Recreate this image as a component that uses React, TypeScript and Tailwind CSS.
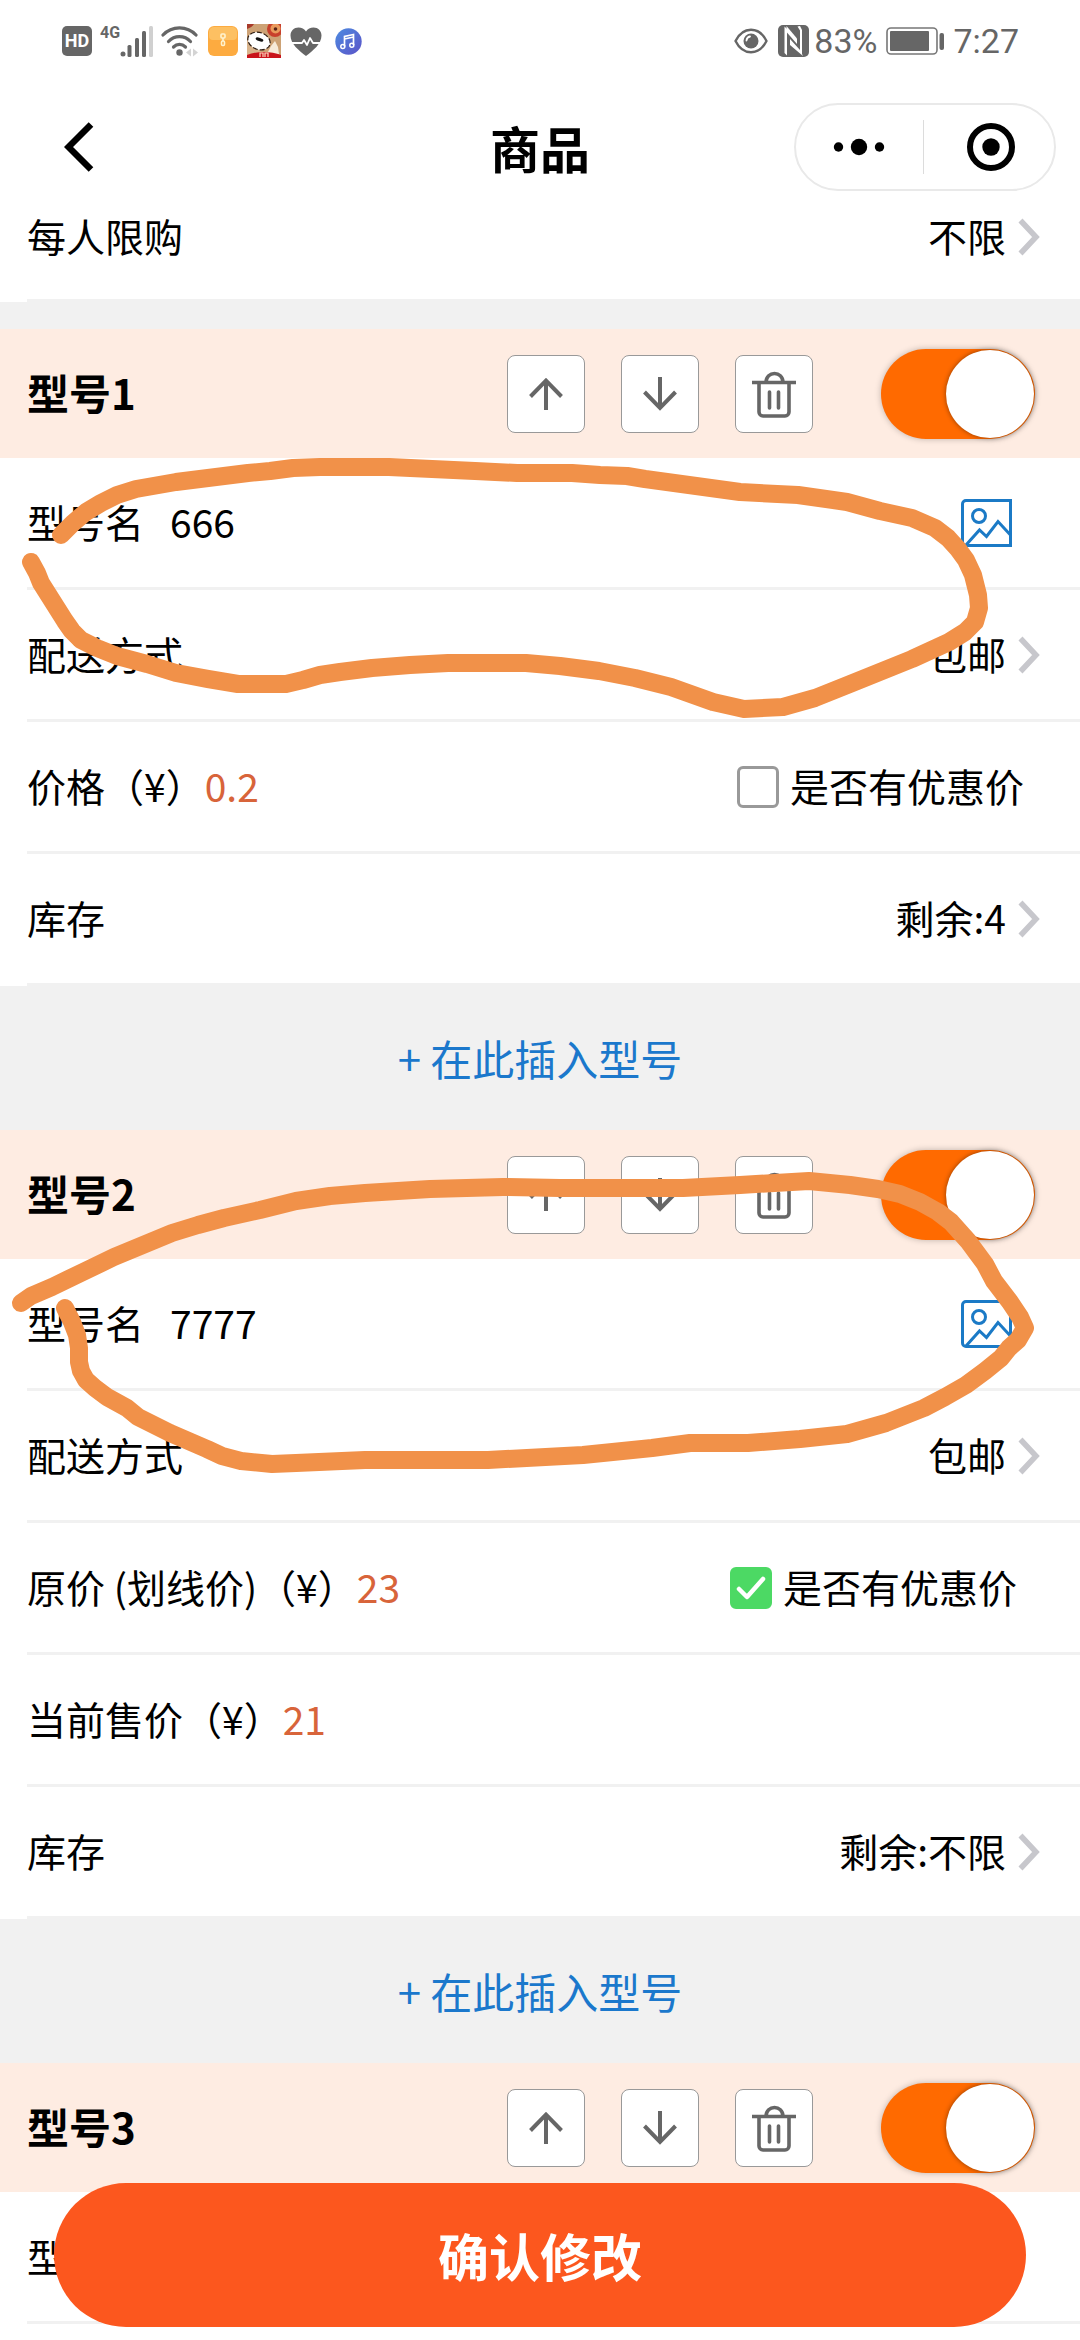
import type { ReactNode } from "react";
import clsx from "clsx";

type Model = {
  id: number;
  name: string;
  shipping?: string;
  prices?: { label: string; value: string }[];
  discount?: boolean;
  stock?: string;
};

const MODELS: Model[] = [
  {
    id: 1,
    name: "666",
    shipping: "包邮",
    prices: [{ label: "价格（¥）", value: "0.2" }],
    discount: false,
    stock: "剩余:4",
  },
  {
    id: 2,
    name: "7777",
    shipping: "包邮",
    prices: [
      { label: "原价 (划线价)（¥）", value: "23" },
      { label: "当前售价（¥）", value: "21" },
    ],
    discount: true,
    stock: "剩余:不限",
  },
  { id: 3, name: "" },
];

/* ---------- status bar ---------- */

function SignalIcon() {
  return (
    <svg width="34" height="32" viewBox="0 0 34 32" fill="#666">
      <circle cx="3" cy="29" r="2.5" />
      <rect x="7.5" y="20" width="4" height="12" rx="1.5" />
      <rect x="15" y="13" width="4" height="19" rx="1.5" />
      <rect x="22" y="6" width="4" height="26" rx="1.5" />
      <rect x="29" y="1" width="4" height="31" rx="1.5" fill="#d0d0d0" />
    </svg>
  );
}

function WifiIcon() {
  return (
    <svg width="38" height="32" viewBox="0 0 38 32" fill="none" stroke="#666" strokeWidth="3.2" strokeLinecap="round">
      <path d="M2 10C11 0.5 26 0.5 35 10" />
      <path d="M7.5 16.5C13.5 10 23.5 10 29.5 16.5" />
      <path d="M12.5 22C16 18.5 21 18.5 24.5 22" />
      <circle cx="18.5" cy="27.5" r="3.2" fill="#666" stroke="none" />
      <path d="M30 23.5v8l-5-4zM32 23.5v8l5-4z" fill="#d4d4d4" stroke="none" />
    </svg>
  );
}

function ArchiveAppIcon() {
  return (
    <svg width="30" height="30" viewBox="0 0 30 30">
      <rect width="30" height="30" rx="6" fill="#fdab40" />
      <path d="M1 6a5 5 0 0 1 5-5h18a5 5 0 0 1 5 5v4a4 4 0 0 1-4 4H5a4 4 0 0 1-4-4z" fill="#fdc062" />
      <g fill="none" stroke="#fff3cf" strokeWidth="1.6">
        <rect x="13" y="8" width="4" height="4" rx="1" />
        <path d="M15 12v3" />
        <rect x="13.5" y="15" width="3" height="4.5" rx="1.2" />
      </g>
    </svg>
  );
}

function MallAppIcon() {
  return (
    <svg width="34" height="34" viewBox="0 0 34 34">
      <rect width="34" height="34" fill="#cda275" />
      <path d="M0 13c8 2 14 12 15 21H0z" fill="#d9b48c" />
      <path d="M0 0h7c-1 2-4 4-7 5z" fill="#a83a2a" />
      <circle cx="28" cy="5" r="8" fill="#c8402c" />
      <circle cx="28.5" cy="4.5" r="5" fill="#e99a5c" />
      <circle cx="28.5" cy="5" r="1.8" fill="#5a2416" />
      <path d="M24 22l4-5 3 6 1 7H20z" fill="#f6ead9" />
      <ellipse
        cx="12"
        cy="17"
        rx="11.5"
        ry="8.5"
        transform="rotate(20 12 17)"
        fill="#fff"
        stroke="#2a1a10"
        strokeWidth="1.2"
        strokeDasharray="5 2"
      />
      <ellipse cx="12.5" cy="15.5" rx="4" ry="1.7" transform="rotate(18 12.5 15.5)" fill="#111" />
      <path d="M0 31c10-4 24-4 34 0v3H0z" fill="#c9141b" />
      <path d="M13 33v-4h3v4M18 33v-4h3v4" fill="none" stroke="#ffd9c0" strokeWidth="1.2" />
    </svg>
  );
}

function HealthIcon() {
  return (
    <svg width="32" height="29" viewBox="0 0 32 29">
      <path
        d="M16 29C9 23.5 0.5 17 0.5 8.5 0.5 4 4 0.5 8.5 0.5 11.5 0.5 14.5 2 16 4.5 17.5 2 20.5 0.5 23.5 0.5 28 0.5 31.5 4 31.5 8.5 31.5 17 23 23.5 16 29z"
        fill="#666"
      />
      <path d="M2 16h10l2-3 3 5 3-7 3 5h8" fill="none" stroke="#fff" strokeWidth="1.8" strokeLinejoin="round" />
    </svg>
  );
}

function MusicIcon() {
  return (
    <svg width="27" height="27" viewBox="0 0 27 27">
      <defs>
        <linearGradient id="music" x1="0" y1="0" x2="1" y2="1">
          <stop offset="0" stopColor="#4d8be0" />
          <stop offset="1" stopColor="#5b53c8" />
        </linearGradient>
      </defs>
      <circle cx="13.5" cy="13.5" r="13.2" fill="url(#music)" />
      <path d="M9.500 18.500V8.500l9-2v10.500M9.500 11l9-2" fill="none" stroke="#fff" strokeWidth="1.7" />
      <circle cx="7.8" cy="18.5" r="2" fill="none" stroke="#fff" strokeWidth="1.5" />
      <circle cx="16.8" cy="17.3" r="2" fill="none" stroke="#fff" strokeWidth="1.5" />
    </svg>
  );
}

function EyeIcon() {
  return (
    <svg width="34" height="26" viewBox="0 0 34 26">
      <path
        d="M1.500 13C9-2 25-2 32.500 13 25 28 9 28 1.500 13z"
        fill="none"
        stroke="#666"
        strokeWidth="2.4"
        strokeLinejoin="round"
      />
      <circle cx="17" cy="13" r="7.5" fill="#666" />
      <path d="M12.500 12.500a4.500 4.500 0 0 1 3.500-4" fill="none" stroke="#fff" strokeWidth="1.8" strokeLinecap="round" />
    </svg>
  );
}

function NfcIcon() {
  return (
    <svg width="31" height="32" viewBox="0 0 31 32">
      <rect width="31" height="32" rx="5" fill="#666" />
      <path d="M6.500 1.500L9 4v26.500L6.500 28z" fill="#fff" />
      <path d="M8.500 1L19 13.500V19L8.500 7z" fill="#fff" />
      <path d="M19.500 1.500l2.500 4V25l-10-11v6l13 11-1-2V5l-2-4z" fill="#fff" />
    </svg>
  );
}

function BatteryIcon() {
  return (
    <svg width="58" height="28" viewBox="0 0 58 28">
      <rect x="1" y="1" width="50" height="26" rx="4" fill="none" stroke="#777" strokeWidth="1.6" />
      <rect x="4" y="4" width="39" height="20" rx="1" fill="#666" />
      <rect x="53.5" y="6" width="4.5" height="17" rx="2" fill="#666" />
    </svg>
  );
}

function StatusBar() {
  return (
    <div className="flex h-[82px] items-center justify-between pr-[61px] pl-[62px] font-[Roboto,sans-serif] text-[#666]">
      <div className="flex items-center">
        <span className="flex size-[30px] items-center justify-center rounded-[5px] bg-[#666] text-[18px] leading-none font-bold text-white">
          HD
        </span>
        <span className="ml-2 flex h-8 items-start">
          <span className="text-[16px] leading-4 font-bold">4G</span>
          <SignalIcon />
        </span>
        <span className="ml-[7px] flex items-center gap-[9px]">
          <WifiIcon />
          <ArchiveAppIcon />
          <MallAppIcon />
          <HealthIcon />
          <span className="pl-1">
            <MusicIcon />
          </span>
        </span>
      </div>
      <div className="flex items-center text-[34px] leading-10">
        <EyeIcon />
        <span className="ml-[10px]">
          <NfcIcon />
        </span>
        <span className="ml-[5px]">83%</span>
        <span className="mx-[9px]">
          <BatteryIcon />
        </span>
        <span>7:27</span>
      </div>
    </div>
  );
}

function NavBar() {
  return (
    <header className="grid h-[130px] grid-cols-[1fr_auto_1fr] items-center px-6">
      <button type="button" aria-label="返回" className="justify-self-start pl-10">
        <svg width="30" height="50" viewBox="0 0 30 50" fill="none" stroke="#000" strokeWidth="6.5">
          <path d="M27 2.500L4.500 25 27 47.500" />
        </svg>
      </button>
      <h1 className="text-[50px] leading-[60px] font-bold">商品</h1>
      <div className="flex h-[88px] w-[262px] items-center justify-self-end rounded-full border-2 border-[#e9e9e9] bg-white">
        <button type="button" aria-label="更多" className="flex flex-1 justify-center">
          <svg width="52" height="18" viewBox="0 0 52 18">
            <circle cx="5.5" cy="9" r="4.7" />
            <circle cx="26" cy="9" r="8.2" />
            <circle cx="46.5" cy="9" r="4.7" />
          </svg>
        </button>
        <span className="h-[54px] w-px bg-[#dcdcdc]" />
        <button type="button" aria-label="关闭" className="flex flex-1 justify-center pl-1">
          <svg width="50" height="50" viewBox="0 0 50 50">
            <circle cx="25" cy="25" r="21" fill="none" stroke="#000" strokeWidth="6" />
            <circle cx="25" cy="25" r="8.7" />
          </svg>
        </button>
      </div>
    </header>
  );
}

/* ---------- form rows ---------- */

function Chevron() {
  return (
    <svg width="22" height="38" viewBox="0 0 22 38" fill="none" stroke="#c7c7cc" strokeWidth="5.5" className="shrink-0">
      <path d="M2.500 2.500L18 19 2.500 35.500" />
    </svg>
  );
}

function Row({ children, scrolled }: { children: ReactNode; scrolled?: boolean }) {
  return (
    <div className="bg-white pl-[27px]">
      <div
        className={clsx(
          "flex justify-between border-b-[3px] border-[#f1f1f1]",
          scrolled ? "h-[90px] items-start pt-[3px]" : "h-[132px] items-center",
        )}
      >
        {children}
      </div>
    </div>
  );
}

function LinkRow({ label, value, scrolled }: { label: string; value: string; scrolled?: boolean }) {
  return (
    <Row scrolled={scrolled}>
      <span className="pb-[3px]">{label}</span>
      <button type="button" className="flex items-center gap-3 pr-10">
        <span className="pb-[3px]">{value}</span>
        <Chevron />
      </button>
    </Row>
  );
}

function ToolButton({ label, children }: { label: string; children: ReactNode }) {
  return (
    <button
      type="button"
      aria-label={label}
      className="flex size-[78px] items-center justify-center rounded-lg border border-[#999] bg-white"
    >
      <svg width="46" height="48" viewBox="0 0 46 48" fill="none" stroke="#666" strokeWidth="4">
        {children}
      </svg>
    </button>
  );
}

function ModelHeader({ id }: { id: number }) {
  return (
    <div className="flex h-[129px] items-center justify-between bg-[#feece2] pr-[45px] pl-[27px]">
      <h2 className="pb-[3px] text-[42px] leading-[60px] font-bold">型号{id}</h2>
      <div className="flex items-center gap-9">
        <ToolButton label="上移">
          <path d="M23 40V10M7.500 26.500L23 10.500l15.500 16" />
        </ToolButton>
        <ToolButton label="下移">
          <path d="M23 7v31M7.500 22L23 38l15.500-16" />
        </ToolButton>
        <ToolButton label="删除">
          <path
            d="M1 12.500h44M15 12.500c0-12 17-12 17 0M8 13v29a4 4 0 0 0 4 4h22a4 4 0 0 0 4-4V13"
            strokeWidth="3.6"
          />
          <path d="M18.500 22v16M27.500 22v16" strokeLinecap="round" strokeWidth="3.6" />
        </ToolButton>
        <input
          type="checkbox"
          role="switch"
          aria-label={`启用型号${id}`}
          defaultChecked
          className="ml-8 flex h-[90px] w-[154px] appearance-none items-center rounded-full bg-gray-300 p-px shadow-[0_0_6px_rgba(0,0,0,0.25)] before:block before:size-[88px] before:rounded-full before:bg-white before:shadow-[0_0_5px_rgba(0,0,0,0.45)] checked:justify-end checked:bg-[#ff6a00]"
        />
      </div>
    </div>
  );
}

function NameRow({ id, name }: { id: number; name: string }) {
  return (
    <Row>
      <label htmlFor={`name-${id}`} className="pb-[3px]">
        型号名
      </label>
      <input
        id={`name-${id}`}
        type="text"
        defaultValue={name}
        className="ml-[26px] min-w-0 flex-1 pb-[3px] outline-none"
      />
      <button type="button" aria-label="型号图片" className="mr-[68px] shrink-0">
        <svg width="51" height="48" viewBox="0 0 51 48" fill="none" stroke="#1b7ac6" strokeWidth="3">
          <path d="M5 46.500a3.500 3.500 0 0 1-3.500-3.500V5A3.500 3.500 0 0 1 5 1.500h44.500v45z" />
          <circle cx="18" cy="17" r="6.5" />
          <path d="M5 46L18.500 31l7 6.500L37 22.500 49 35.500" />
        </svg>
      </button>
    </Row>
  );
}

function DiscountCheck({ id, checked }: { id: number; checked: boolean }) {
  return (
    <label className={clsx("flex shrink-0 items-center gap-[11px]", checked ? "pr-[63px]" : "pr-14")}>
      <span className="grid size-[42px] place-items-center">
        <input
          type="checkbox"
          name={`discount-${id}`}
          defaultChecked={checked}
          className="peer col-start-1 row-start-1 size-[42px] appearance-none rounded-md border-[3px] border-[#999] bg-white checked:border-[#4cd964] checked:bg-[#4cd964]"
        />
        <svg
          width="32"
          height="26"
          viewBox="0 0 32 26"
          fill="none"
          stroke="#fff"
          strokeWidth="4.5"
          strokeLinejoin="round"
          strokeLinecap="round"
          className="pointer-events-none col-start-1 row-start-1 hidden peer-checked:block"
        >
          <path d="M4 14l8 8L28 4" />
        </svg>
      </span>
      <span className="pb-[3px]">是否有优惠价</span>
    </label>
  );
}

function ModelSection({ model }: { model: Model }) {
  return (
    <section>
      <ModelHeader id={model.id} />
      <NameRow id={model.id} name={model.name} />
      {model.shipping && <LinkRow label="配送方式" value={model.shipping} />}
      {model.prices?.map((p, i) => (
        <Row key={p.label}>
          <label htmlFor={`price-${model.id}-${i}`} className="pb-[3px]">
            {p.label}
          </label>
          <input
            id={`price-${model.id}-${i}`}
            type="text"
            inputMode="decimal"
            defaultValue={p.value}
            className="min-w-0 flex-1 pb-[3px] text-[#d8643a] outline-none"
          />
          {i === 0 && <DiscountCheck id={model.id} checked={!!model.discount} />}
        </Row>
      ))}
      {model.stock && (
        <>
          <LinkRow label="库存" value={model.stock} />
          <button type="button" className="block h-36 w-full text-center text-[42px] text-[#1b78cc]">
            + 在此插入型号
          </button>
        </>
      )}
    </section>
  );
}

/* Hand-drawn marker loops around the two model names */
function MarkerLoops() {
  return (
    <svg
      viewBox="0 0 1080 2340"
      className="pointer-events-none absolute inset-x-0 top-0 w-full"
      fill="none"
      stroke="#f19149"
      strokeWidth="18"
      strokeLinecap="round"
      strokeLinejoin="round"
    >
      <path d="M61 535L73 523 86 512 101 503 117 495 136 489 176 482 248 473 270 471 293 468 320 467 389 467 475 471 517 473 572 473 600 475 627 476 645 479 740 492 798 495 847 502 880 511 912 518 935 528 948 538 958 549 966 560 973 575 978 595 979 608 975 622 965 632 949 642 912 659 850 684 815 698 783 707 744 709 713 702 671 687 635 678 599 671 560 666 526 663 448 663 410 665 372 668 340 672 320 675 303 680 286 684 238 684 208 679 176 673 147 664 117 656 97 648 81 640 72 631 65 621 41 583 37 573 31 562" />
      <path d="M21 1303L31 1296 52 1287 83 1272 114 1257 172 1233 198 1225 224 1218 260 1210 296 1201 330 1196 365 1193 430 1189 503 1187 560 1188 683 1188 740 1185 809 1181 850 1185 878 1189 900 1194 920 1202 938 1212 951 1222 968 1241 985 1264 994 1281 1010 1302 1020 1317 1025 1328 1018 1340 1009 1348 1001 1358 985 1371 966 1385 945 1397 924 1408 886 1423 847 1434 800 1439 748 1443 690 1443 652 1448 583 1455 488 1460 365 1460 296 1463 272 1464 241 1461 222 1456 207 1449 170 1433 138 1417 127 1408 107 1397 95 1388 86 1380 81 1371 79 1362 79 1348 77 1335 72 1322 65 1308" />
    </svg>
  );
}

export default function App() {
  return (
    <div className="relative min-h-screen bg-[#f1f1f1] font-['Noto_Sans_CJK_SC','Noto_Sans',sans-serif] text-[39px] leading-10 text-black">
      <div className="bg-white">
        <StatusBar />
        <NavBar />
      </div>

      <main>
        <LinkRow label="每人限购" value="不限" scrolled />
        <div className="h-[27px]" />
        {MODELS.map((m) => (
          <ModelSection key={m.id} model={m} />
        ))}
        <div className="h-4 bg-white" />
      </main>

      <MarkerLoops />

      <button
        type="button"
        className="fixed inset-x-[54px] bottom-[13px] h-36 rounded-full bg-[#fc571e] text-[51px] leading-[60px] font-bold text-white"
      >
        确认修改
      </button>
    </div>
  );
}
